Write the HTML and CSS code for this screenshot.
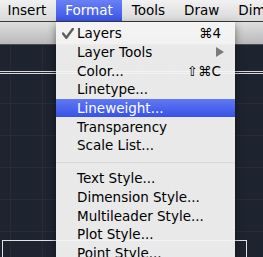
FILE: index.html
```html
<!DOCTYPE html>
<html>
  <head>
    <title>Format Menu</title>
    <link rel="stylesheet" href="styles.css">
  </head>
  <body>
    <div class="menubar">
      <span class="menubar-item first">Insert</span>
      <span class="menubar-item active">Format</span>
      <span class="menubar-item">Tools</span>
      <span class="menubar-item">Draw</span>
      <span class="menubar-item">Dimension</span>
    </div>
    <div class="toolbar"></div>
    <div class="drawing">
      <div class="rule"></div>
      <div class="frame"></div>
    </div>

    <ul class="menu">
      <li class="menu-item">
        <svg class="check" width="12" height="12" viewBox="0 0 12 12">
          <path d="M1 5.5 L4.3 9.8 L10.8 1" fill="none" stroke="#5e5e5e" stroke-width="2.4" stroke-linecap="round" stroke-linejoin="round"/>
        </svg>
        <span>Layers</span><span class="shortcut">&#8984;4</span>
      </li>
      <li class="menu-item">
        <span>Layer Tools</span>
        <svg class="arrow" width="8" height="10" viewBox="0 0 8 10"><path d="M0 0 L8 5 L0 10 Z" fill="#7a7a7a"/></svg>
      </li>
      <li class="menu-item"><span>Color...</span><span class="shortcut">&#8679;&#8984;C</span></li>
      <li class="menu-item"><span>Linetype...</span></li>
      <li class="menu-item selected"><span>Lineweight...</span></li>
      <li class="menu-item"><span>Transparency</span></li>
      <li class="menu-item"><span>Scale List...</span></li>
      <li class="separator"></li>
      <li class="menu-item"><span>Text Style...</span></li>
      <li class="menu-item"><span>Dimension Style...</span></li>
      <li class="menu-item"><span>Multileader Style...</span></li>
      <li class="menu-item"><span>Plot Style...</span></li>
      <li class="menu-item"><span>Point Style...</span></li>
    </ul>
  </body>
</html>
```

FILE: styles.css
```css
body
{
  margin: 0;
  width: 263px;
  height: 257px;
  overflow: hidden;
  position: relative;
  font-family: "DejaVu Sans", sans-serif;
  background-color: #1e2330;
}

.menubar
{
  display: flex;
  height: 21px;
  white-space: nowrap;
  overflow: hidden;
  background: linear-gradient(#f1f1f1, #d9d9d9);
  border-bottom: 1px solid #3a3a3a;
  font-size: 13.5px;
  line-height: 21px;
  color: #000;
}

.menubar-item
{
  padding: 0 9.5px;
}

.menubar-item.first
{
  margin-left: -2px;
}

.menubar-item.active
{
  color: #fff;
  background: linear-gradient(#6a80f4, #3a55e8);
}

.toolbar
{
  height: 22px;
  background: linear-gradient(#dedede, #b9b9b9);
  border-bottom: 1px solid #4a4a4a;
}

.drawing
{
  height: 212px;
  overflow: hidden;
  background-color: #1e2330;
  background-image:
    linear-gradient(90deg, rgba(255, 255, 255, 0.035) 1px, transparent 1px),
    linear-gradient(rgba(255, 255, 255, 0.035) 1px, transparent 1px);
  background-size: 32px 32px;
  background-position: 10px 26px;
}

.rule
{
  margin-top: 26px;
  height: 0;
  padding-top: 1px;
  border-top: 1px solid #d8d8d8;
  border-bottom: 1px solid #d8d8d8;
}

.frame
{
  margin: 166px 0 0 2px;
  width: 243px;
  height: 40px;
  border: 1px solid #e2e2e2;
}

.menu
{
  position: absolute;
  top: 22px;
  left: 56px;
  width: 179px;
  height: 235px;
  overflow: hidden;
  box-sizing: border-box;
  margin: 0;
  padding: 2px 0 0 0;
  list-style: none;
  background-color: rgba(244, 244, 244, 0.95);
  box-shadow: 0 3px 8px rgba(0, 0, 0, 0.45);
  font-size: 13.5px;
  color: #000;
}

.menu-item
{
  position: relative;
  display: flex;
  justify-content: space-between;
  align-items: center;
  height: 18.7px;
  padding: 0 14px 0 21px;
  white-space: nowrap;
}

.menu-item.selected
{
  color: #fff;
  background: linear-gradient(#6178f3, #3752e8);
}

.check
{
  position: absolute;
  left: 6px;
  top: 4px;
}

.shortcut
{
  color: #000;
}

.arrow
{
  margin-right: -3px;
}

.separator
{
  height: 14px;
  background: linear-gradient(transparent 7px, #d9d9d9 7px, #d9d9d9 8px, transparent 8px);
}
```
